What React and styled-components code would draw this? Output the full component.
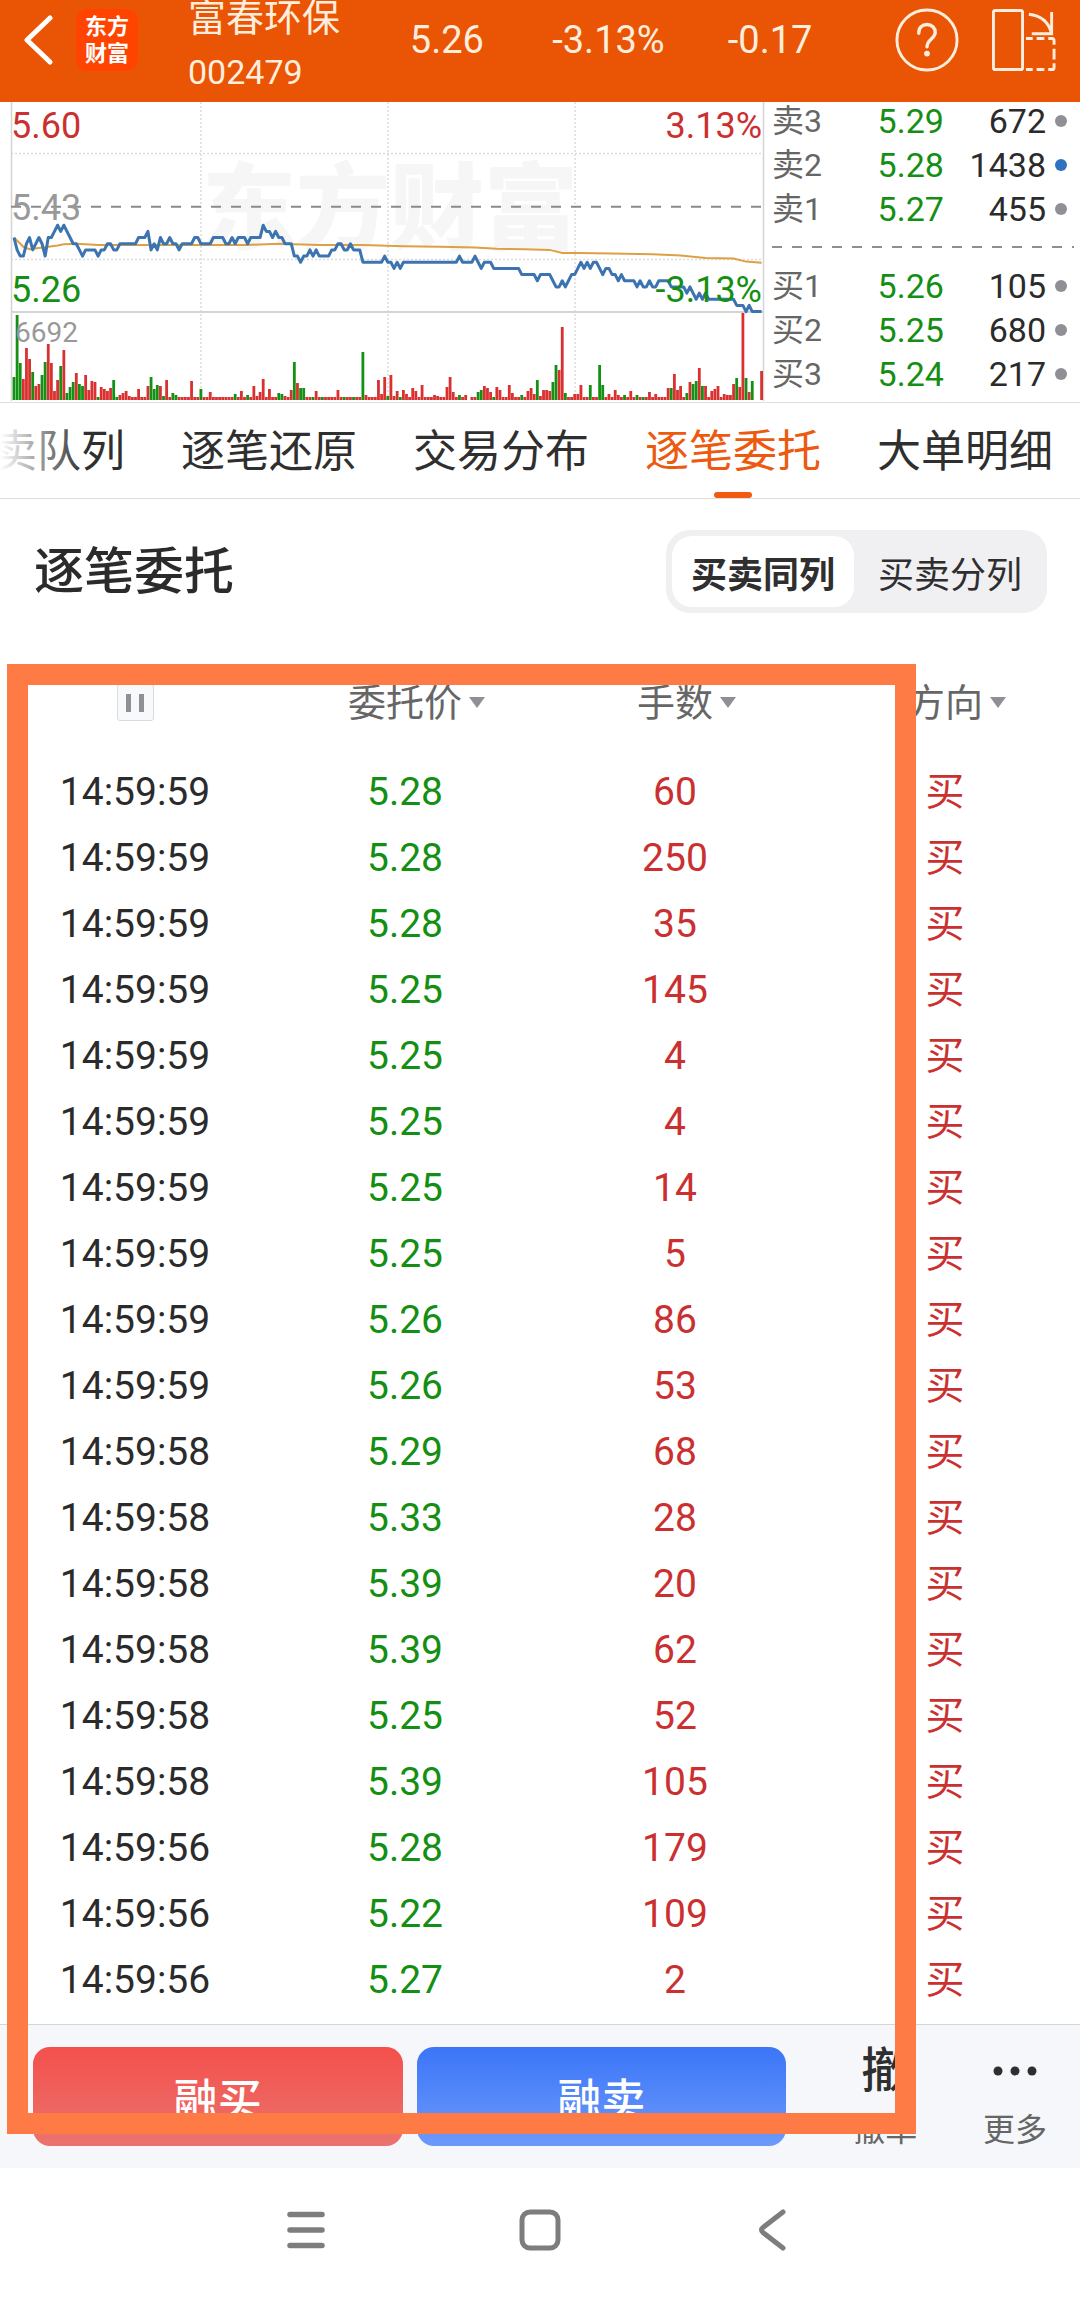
import styled, { createGlobalStyle, css } from "styled-components";
import { useState } from "react";

const RED = "#cb3030"
const GREEN = "#148f14"

const precos = [
    [0, 5], [1, 7], [2, 8], [3, 8], [4, 6], [5, 5], [6, 7], [7, 6], [8, 5], [9, 6], [10, 8], [11, 5], [12, 5],
    [13, 4], [14, 3], [15, 4], [16, 3], [17, 4], [18, 5], [19, 6], [20, 6], [21, 7], [22, 8], [23, 7], [26, 7],
    [27, 8], [28, 7], [29, 7], [30, 6], [31, 6], [32, 7], [33, 7], [34, 6], [39, 6], [40, 5], [42, 5], [43, 4],
    [44, 7], [45, 6], [46, 7], [47, 5], [48, 6], [49, 6], [50, 5], [51, 6], [52, 6], [53, 7], [54, 6], [57, 6],
    [58, 5], [59, 5], [60, 6], [63, 6], [64, 5], [67, 5], [68, 6], [69, 6], [70, 5], [71, 6], [72, 5], [74, 5],
    [75, 6], [76, 5], [79, 5], [80, 3], [81, 4], [82, 4], [83, 5], [84, 4], [85, 5], [86, 5], [87, 6], [89, 6],
    [90, 8], [91, 8], [92, 9], [93, 8], [94, 8], [95, 7], [96, 8], [97, 7], [98, 8], [101, 8], [102, 7], [103, 7],
    [104, 6], [105, 6], [106, 7], [107, 7], [108, 6], [109, 7], [111, 7], [112, 9], [118, 9], [119, 8], [120, 9],
    [121, 9], [122, 10], [123, 9], [124, 10], [125, 9], [142, 9], [143, 8], [144, 9], [147, 9], [148, 8], [149, 9],
    [150, 10], [151, 9], [153, 9], [154, 10], [162, 10], [163, 11], [167, 11], [168, 12], [169, 11], [172, 11],
    [173, 12], [174, 13], [175, 13], [176, 12], [177, 13], [178, 12], [179, 11], [180, 11], [181, 10], [182, 9],
    [183, 10], [184, 9], [185, 10], [186, 9], [187, 9], [188, 10], [189, 11], [190, 10], [191, 10], [192, 11],
    [193, 11], [194, 12], [195, 11], [196, 12], [199, 12], [200, 13], [201, 12], [202, 13], [203, 13], [204, 12],
    [205, 13], [206, 13], [207, 12], [210, 12], [211, 13], [215, 13], [216, 14], [217, 13], [218, 14], [219, 15],
    [220, 14], [221, 15], [222, 14], [223, 15], [231, 15], [232, 16], [234, 16], [235, 17], [236, 16], [237, 17],
    [240, 17],
]

const media = [
    [0, 5], [3, 6.5], [5, 6.9], [8, 6.7], [11, 6.5], [14, 6.3], [16, 6.1], [20, 6], [27, 6.2], [60, 6.2],
    [75, 6.2], [85, 6], [98, 6.2], [112, 6.2], [125, 6.4], [137, 6.5], [148, 6.6], [155, 6.8], [164, 6.9],
    [172, 7], [176, 7.5], [181, 7.5], [192, 7.6], [205, 7.7], [214, 7.9], [222, 8.3], [231, 8.4], [235, 8.9],
    [240, 9.1],
]

// volume por minuto, negativo = verde
const volumes = [
    -23, -85, -37, 21, 52, 41, -28, 14, 16, -25, -38, 56, 37, 9, 20, -34, 50, -7, -13, -18,
    27, -16, -14, 25, 10, 19, 18, -3, 13, 11, 9, 12, -20, -3, 5, 7, 9, 4, 3, 3,
    11, 3, 3, 14, -23, -11, -15, 14, -4, 20, 3, -7, -5, 3, 3, 3, 3, 19, 3, 3,
    -11, 3, 3, 8, 3, 3, 3, 3, 3, 3, 3, -6, 3, 9, 3, -5, 3, 14, 4, 8,
    21, 3, 11, 3, 3, -7, -6, 4, 3, 10, -38, 17, -12, -12, 3, 3, -3, 9, 3, -3,
    3, 3, 3, 3, 10, 3, -3, 3, 3, -3, 3, 3, -48, 5, 3, 3, 3, 20, 6, 23,
    -4, 25, 4, 9, -3, 10, 6, 3, 12, 9, 3, 15, 3, 3, 3, 5, 4, 3, 3, 13,
    23, 8, 3, -5, 3, 5, 0, 3, 3, -8, -10, 14, 12, 8, -3, 13, 10, 3, 3, 15,
    7, 3, 3, -5, 3, 9, 12, 6, -20, 4, 10, 10, 9, -18, -35, 30, 73, -7, 3, 3,
    6, 6, 15, 3, 3, -15, 3, 3, -35, -15, 3, 6, 3, 10, 5, 3, -5, 3, 9, 3,
    -5, 3, -3, 3, 8, 3, 6, 3, 3, 3, 12, -12, 26, 10, 14, 3, -7, 18, -16, -19,
    32, -14, 14, 3, 9, 11, 14, 3, 6, 5, 5, 16, -22, 13, 87, -22, 8, -19, 0, 0, 29,
]

const vendas = [
    { nome: "卖3", preco: "5.29", volume: "672" },
    { nome: "卖2", preco: "5.28", volume: "1438", ativo: true },
    { nome: "卖1", preco: "5.27", volume: "455" },
]

const compras = [
    { nome: "买1", preco: "5.26", volume: "105" },
    { nome: "买2", preco: "5.25", volume: "680" },
    { nome: "买3", preco: "5.24", volume: "217" },
]

const abas = ["卖队列", "逐笔还原", "交易分布", "逐笔委托", "大单明细"]

const ordens = [
    ["14:59:59", "5.28", 60],
    ["14:59:59", "5.28", 250],
    ["14:59:59", "5.28", 35],
    ["14:59:59", "5.25", 145],
    ["14:59:59", "5.25", 4],
    ["14:59:59", "5.25", 4],
    ["14:59:59", "5.25", 14],
    ["14:59:59", "5.25", 5],
    ["14:59:59", "5.26", 86],
    ["14:59:59", "5.26", 53],
    ["14:59:58", "5.29", 68],
    ["14:59:58", "5.33", 28],
    ["14:59:58", "5.39", 20],
    ["14:59:58", "5.39", 62],
    ["14:59:58", "5.25", 52],
    ["14:59:58", "5.39", 105],
    ["14:59:56", "5.28", 179],
    ["14:59:56", "5.22", 109],
    ["14:59:56", "5.27", 2],
]

export default function App() {
    const [aba, setAba] = useState("逐笔委托")
    const [modo, setModo] = useState("买卖同列")

    return (
        <Pagina>
            <GlobalStyle />
            <Topo />
            <Mercado>
                <Grafico />
                <Livro>
                    {vendas.map((v) => <Oferta key={v.nome} {...v} />)}
                    <Divisor viewBox="0 0 302 2" preserveAspectRatio="none" aria-hidden="true">
                        <path d="M0 1H302" stroke="#8e8e8e" strokeWidth="2" strokeDasharray="10 10" />
                    </Divisor>
                    {compras.map((c) => <Oferta key={c.nome} {...c} />)}
                </Livro>
            </Mercado>
            <Abas>
                {abas.map((a) => (
                    <Aba key={a} $ativa={a === aba} onClick={() => setAba(a)}>{a}</Aba>
                ))}
            </Abas>
            <Secao>
                <h1>逐笔委托</h1>
                <Seletor>
                    {["买卖同列", "买卖分列"].map((m) => (
                        <Opcao key={m} $ativa={m === modo} onClick={() => setModo(m)}>{m}</Opcao>
                    ))}
                </Seletor>
            </Secao>
            <Conteudo>
                <Tabela>
                    <thead>
                        <tr>
                            <th scope="col"><Pausar /></th>
                            <th scope="col"><Ordenar nome="委托价" /></th>
                            <th scope="col"><Ordenar nome="手数" /></th>
                            <th scope="col"><Ordenar nome="方向" /></th>
                        </tr>
                    </thead>
                    <tbody>
                        {ordens.map(([hora, preco, lotes], i) => (
                            <tr key={i}>
                                <Celula>{hora}</Celula>
                                <Celula $cor={GREEN}>{preco}</Celula>
                                <Celula $cor={RED}>{lotes}</Celula>
                                <Celula $cor={RED}>买</Celula>
                            </tr>
                        ))}
                    </tbody>
                </Tabela>
                <Acoes>
                    <Negociar $de="#f4504b" $ate="#ea736f">融买</Negociar>
                    <Negociar $de="#3b76f8" $ate="#6d99fb">融卖</Negociar>
                    <Atalhos>
                        <Atalho>
                            <strong>撤</strong>
                            <span>撤单</span>
                        </Atalho>
                        <Atalho>
                            <svg width="44" height="48" viewBox="0 0 44 48" fill="#2f2f2f" aria-hidden="true">
                                <circle cx="5" cy="24" r="4.5" />
                                <circle cx="22" cy="24" r="4.5" />
                                <circle cx="39" cy="24" r="4.5" />
                            </svg>
                            <span>更多</span>
                        </Atalho>
                    </Atalhos>
                </Acoes>
                <Moldura />
            </Conteudo>
            <Sistema />
        </Pagina>
    )
}

function Topo() {
    return (
        <Cabecalho>
            <BotaoIcone aria-label="返回">
                <svg width="30" height="52" viewBox="0 0 30 52" fill="none" stroke="#fff" strokeWidth="5" strokeLinecap="round" strokeLinejoin="round">
                    <path d="M26 4L3 26L26 48" />
                </svg>
            </BotaoIcone>
            <Logo>东方<br />财富</Logo>
            <Acao>
                <span>富春环保</span>
                <small>002479</small>
            </Acao>
            <Cotacao>
                <span>5.26</span>
                <span>-3.13%</span>
                <span>-0.17</span>
            </Cotacao>
            <BotaoIcone aria-label="帮助">
                <svg width="64" height="64" viewBox="0 0 66 66" fill="none" stroke="#ffeedd" strokeWidth="3" strokeLinecap="round">
                    <circle cx="33" cy="33" r="31" />
                    <path d="M24.500 26C24.500 20 28 17 33 17S41.500 20.500 41.500 25C41.500 32 33 32 33 40" strokeWidth="3.500" />
                    <circle cx="33" cy="47" r="3" fill="#ffeedd" stroke="none" />
                </svg>
            </BotaoIcone>
            <BotaoIcone aria-label="横屏">
                <svg width="68" height="64" viewBox="0 0 68 66" fill="none" stroke="#ffeedd" strokeWidth="3">
                    <rect x="2.500" y="2.500" width="30" height="61" rx="2" />
                    <path d="M39 6.500C52 8 59 14 62 25M62.500 4V26.500H42" />
                    <path d="M36 31.500H43M47 31.500H55M59 31.500H63Q65 31.500 65 34V38M65 42V53M65 57V61Q65 63.500 63 63.500H59M55 63.500H47M43 63.500H36" />
                </svg>
            </BotaoIcone>
        </Cabecalho>
    )
}

function Grafico() {
    const x = (minuto) => 14 + minuto * 3.115
    const y = (tick) => 104.7 + tick * 6.17
    const linha = (pontos) => pontos.map(([m, t]) => `${x(m)},${y(t)}`).join(" ")

    return (
        <Tela viewBox="0 0 766 300" role="img" aria-label="分时图">
            <text x="202" y="140" fontSize="94" fontWeight="900" fill="#f6f6f6">东方财富</text>
            <g stroke="#dcdcdc" strokeWidth="1.5" strokeDasharray="2 2">
                <path d="M201 0V299M388 0V299M575 0V299M11 51.500H764M11 157.500H764" />
            </g>
            <path d="M11.500 0V299M763.500 0V299" stroke="#d4d4d4" strokeWidth="1.5" />
            <path d="M11 210H764" stroke="#d4d4d4" strokeWidth="2" />
            <path d="M11 104.700H763" stroke="#8a8a8a" strokeWidth="2" strokeDasharray="10 10" />
            <polyline points={linha(media)} fill="none" stroke="#dda045" strokeWidth="2" />
            <polyline points={linha(precos)} fill="none" stroke="#3b74b0" strokeWidth="3" strokeLinejoin="round" />
            {volumes.map((v, i) => (
                <rect key={i} x={x(i) - 1.4} y={298 - Math.abs(v)} width="2.8" height={Math.abs(v)} fill={v < 0 ? "#149014" : "#d93030"} />
            ))}
            <g fontSize="36">
                <text x="11" y="36" fill={RED}>5.60</text>
                <text x="11" y="118" fill="#999">5.43</text>
                <text x="11" y="200" fill={GREEN}>5.26</text>
                <text x="762" y="36" fill={RED} textAnchor="end">3.13%</text>
                <text x="762" y="200" fill={GREEN} textAnchor="end">-3.13%</text>
            </g>
            <text x="15" y="240" fontSize="28" fill="#999">6692</text>
        </Tela>
    )
}

function Oferta({ nome, preco, volume, ativo }) {
    return (
        <LinhaOferta>
            <Nome>{nome}</Nome>
            <Preco>{preco}</Preco>
            <Volume>{volume}</Volume>
            <Ponto $ativo={ativo} />
        </LinhaOferta>
    )
}

function Pausar() {
    return (
        <BotaoPausa aria-label="暂停">
            <svg width="18" height="18" viewBox="0 0 18 18" fill="#8f8f96">
                <rect width="5" height="18" />
                <rect x="13" width="5" height="18" />
            </svg>
        </BotaoPausa>
    )
}

function Ordenar({ nome }) {
    return (
        <BotaoOrdem>
            {nome}
            <svg width="16" height="11" viewBox="0 0 16 11" fill="#8f8f96" aria-hidden="true">
                <path d="M0 0H16L8 11Z" />
            </svg>
        </BotaoOrdem>
    )
}

function Sistema() {
    return (
        <BarraSistema>
            <BotaoIcone aria-label="菜单">
                <svg width="44" height="44" viewBox="0 0 44 44" fill="none" stroke="#7d7d7d" strokeWidth="5.500" strokeLinecap="round">
                    <path d="M6 6.500H38M6 22H38M6 37.500H38" />
                </svg>
            </BotaoIcone>
            <BotaoIcone aria-label="主页">
                <svg width="44" height="44" viewBox="0 0 44 44" fill="none" stroke="#7d7d7d" strokeWidth="5">
                    <rect x="4" y="4" width="36" height="36" rx="8" />
                </svg>
            </BotaoIcone>
            <BotaoIcone aria-label="后退">
                <svg width="44" height="44" viewBox="0 0 44 44" fill="none" stroke="#7d7d7d" strokeWidth="5" strokeLinecap="round" strokeLinejoin="round">
                    <path d="M31 4L11 19.500Q8 22 11 24.500L31 40" />
                </svg>
            </BotaoIcone>
        </BarraSistema>
    )
}

const GlobalStyle = createGlobalStyle`
    * {
        box-sizing: border-box;
    }
    body {
        margin: 0;
        background: #fff;
    }
    body, button {
        font-family: Roboto, "Noto Sans CJK SC", sans-serif;
    }
    button {
        border: 0;
        padding: 0;
        background: none;
        cursor: pointer;
    }
`

const Pagina = styled.div`
    color: #2b2b2b;
    overflow-x: hidden;
`

const Cabecalho = styled.header`
    display: flex;
    align-items: center;
    height: 102px;
    padding: 0 22px 22px 24px;
    background: #e95504;
    color: #ffeedd;
`

const BotaoIcone = styled.button`
    display: flex;
    & + & {
        margin-left: 31px;
    }
`

const Logo = styled.div`
    display: flex;
    align-items: center;
    justify-content: center;
    width: 62px;
    height: 62px;
    margin-left: 22px;
    border-radius: 12px;
    background: #ff4400;
    color: #fff;
    font-size: 22px;
    font-weight: 700;
    line-height: 27px;
`

const Acao = styled.div`
    display: flex;
    flex-direction: column;
    align-self: flex-start;
    gap: 18px;
    width: 178px;
    margin-left: 50px;
    line-height: 36px;
    white-space: nowrap;
    span {
        font-size: 38px;
    }
    small {
        font-size: 34px;
    }
`

const Cotacao = styled.div`
    flex: 1;
    display: grid;
    grid-template-columns: repeat(3, 1fr);
    margin-right: 44px;
    text-align: center;
    font-size: 38px;
`

const Mercado = styled.section`
    display: flex;
    border-bottom: 1px solid #dedede;
`

const Tela = styled.svg`
    flex: 766;
    min-width: 0;
    display: block;
`

const Livro = styled.div`
    flex: 308;
    min-width: 0;
    padding-left: 6px;
`

const LinhaOferta = styled.div`
    display: grid;
    grid-template-columns: 7fr 7fr 8fr 12px;
    align-items: center;
    column-gap: 9px;
    padding: 0 13px 6px 0;
    font-size: 34px;
    line-height: 38px;
`

const Nome = styled.span`
    color: #666;
    font-size: 32px;
`

const Preco = styled.span`
    color: ${GREEN};
    text-align: right;
`

const Volume = styled.span`
    text-align: right;
`

const Ponto = styled.i`
    width: 12px;
    height: 12px;
    border-radius: 50%;
    background: ${(props) => props.$ativo ? "#2f72c0" : "#8f8f96"};
`

const Divisor = styled.svg`
    display: block;
    width: calc(100% - 6px);
    height: 2px;
    margin: 12px 0 19px;
`

const Abas = styled.nav`
    position: relative;
    display: flex;
    justify-content: flex-end;
    gap: 56px;
    height: 96px;
    padding-right: 27px;
    overflow: hidden;
    border-bottom: 1px solid #dedede;
    &::before {
        content: "";
        position: absolute;
        z-index: 1;
        left: 0;
        top: 0;
        bottom: 0;
        width: 84px;
        background: linear-gradient(to right, #fff, rgba(255, 255, 255, 0));
    }
`

const Aba = styled.button`
    position: relative;
    flex: none;
    padding-bottom: 5px;
    color: #2f2f2f;
    font-size: 44px;
    ${(props) => props.$ativa && css`
        color: #ec5a10;
        &::after {
            content: "";
            position: absolute;
            left: calc(50% - 19px);
            bottom: 0;
            width: 38px;
            height: 6px;
            border-radius: 3px;
            background: #f25a10;
        }
    `}
`

const Secao = styled.section`
    display: flex;
    justify-content: space-between;
    align-items: center;
    padding: 31px 33px 33px 34px;
    h1 {
        margin: 0;
        font-size: 50px;
        font-weight: 500;
        line-height: 72px;
    }
`

const Seletor = styled.div`
    display: flex;
    padding: 6px;
    border-radius: 24px;
    background: #f0f0f3;
`

const Opcao = styled.button`
    height: 71px;
    padding: 0 19px;
    border-radius: 20px;
    background: ${(props) => props.$ativa ? "#fff" : "none"};
    color: #2f2f2f;
    font-size: 36px;
    font-weight: ${(props) => props.$ativa ? 700 : 400};
    & + & {
        padding-left: 24px;
    }
`

const Conteudo = styled.main`
    position: relative;
`

const Tabela = styled.table`
    width: 100%;
    margin-bottom: 11px;
    border-collapse: collapse;
    table-layout: fixed;
    th {
        height: 113px;
        padding: 0;
    }
`

const Celula = styled.td`
    height: 66px;
    padding: 0;
    color: ${(props) => props.$cor || "#2b2b2b"};
    font-size: 39px;
    line-height: 60px;
    text-align: center;
`

const BotaoPausa = styled.button`
    display: flex;
    align-items: center;
    justify-content: center;
    width: 37px;
    height: 37px;
    margin: 0 auto;
    border: 1px solid #d9dbe0;
    border-radius: 3px;
    background: #f7f9fb;
`

const BotaoOrdem = styled.button`
    display: inline-flex;
    align-items: center;
    gap: 7px;
    padding-left: 23px;
    color: #666;
    font-size: 38px;
    line-height: 48px;
`

const Acoes = styled.footer`
    display: flex;
    gap: 14px;
    padding: 22px 0 22px 33px;
    border-top: 1px solid #d3d5d9;
    background: #f6f7fa;
`

const Negociar = styled.button`
    flex: 370;
    height: 99px;
    border-radius: 17px;
    background: linear-gradient(${(props) => props.$de}, ${(props) => props.$ate});
    color: #fff;
    font-size: 44px;
    font-weight: 500;
`

const Atalhos = styled.div`
    flex: 260;
    display: grid;
    grid-template-columns: 1fr 1fr;
    padding-left: 20px;
`

const Atalho = styled.button`
    display: flex;
    flex-direction: column;
    align-items: center;
    justify-content: space-between;
    strong {
        color: #2f2f2f;
        font-size: 48px;
        font-weight: 500;
        line-height: 48px;
    }
    span {
        color: #666;
        font-size: 32px;
        line-height: 32px;
    }
`

const Moldura = styled.div`
    position: absolute;
    top: 18px;
    right: 164px;
    bottom: 34px;
    left: 7px;
    border: 21px solid #ff7b45;
    pointer-events: none;
`

const BarraSistema = styled.nav`
    display: flex;
    justify-content: center;
    gap: 190px;
    padding: 40px 0 46px;
    ${BotaoIcone} {
        margin: 0;
    }
`
